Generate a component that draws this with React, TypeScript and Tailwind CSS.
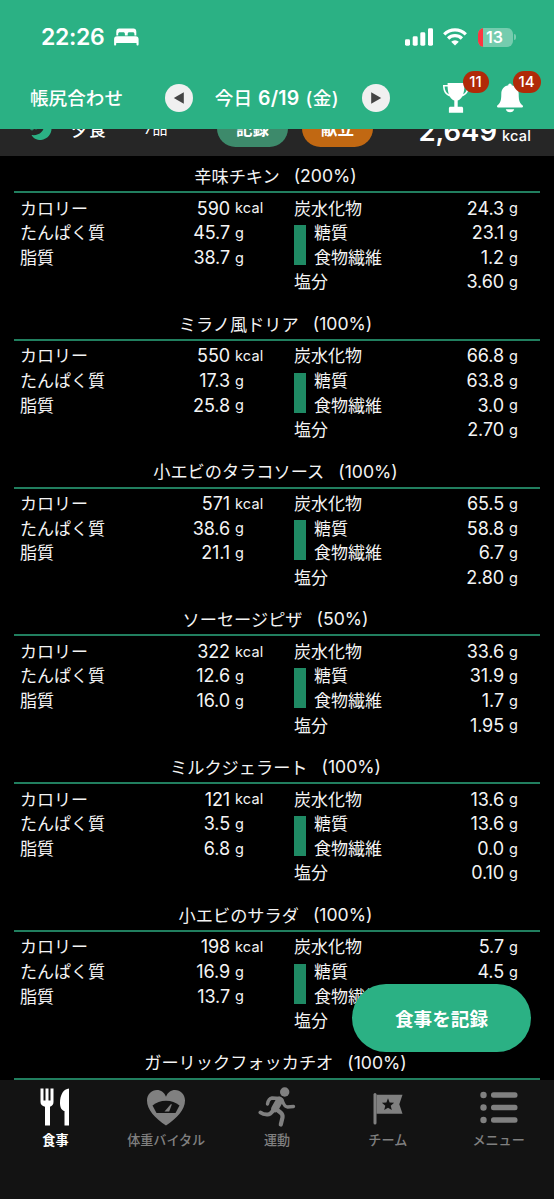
import type { ReactNode } from 'react';
import clsx from 'clsx';

type Nutrients = {
  kcal: string;
  protein: string;
  fat: string;
  carbs: string;
  sugar: string;
  fiber: string;
  salt: string;
};

type Dish = {
  name: string;
  percent: number;
  nutrients?: Nutrients;
};

const dishes: Dish[] = [
  { name: '辛味チキン', percent: 200, nutrients: { kcal: '590', protein: '45.7', fat: '38.7', carbs: '24.3', sugar: '23.1', fiber: '1.2', salt: '3.60' } },
  { name: 'ミラノ風ドリア', percent: 100, nutrients: { kcal: '550', protein: '17.3', fat: '25.8', carbs: '66.8', sugar: '63.8', fiber: '3.0', salt: '2.70' } },
  { name: '小エビのタラコソース', percent: 100, nutrients: { kcal: '571', protein: '38.6', fat: '21.1', carbs: '65.5', sugar: '58.8', fiber: '6.7', salt: '2.80' } },
  { name: 'ソーセージピザ', percent: 50, nutrients: { kcal: '322', protein: '12.6', fat: '16.0', carbs: '33.6', sugar: '31.9', fiber: '1.7', salt: '1.95' } },
  { name: 'ミルクジェラート', percent: 100, nutrients: { kcal: '121', protein: '3.5', fat: '6.8', carbs: '13.6', sugar: '13.6', fiber: '0.0', salt: '0.10' } },
  { name: '小エビのサラダ', percent: 100, nutrients: { kcal: '198', protein: '16.9', fat: '13.7', carbs: '5.7', sugar: '4.5', fiber: '', salt: '' } },
  { name: 'ガーリックフォッカチオ', percent: 100 },
];

function Row({ label, value, unit }: { label: string; value: string; unit: string }) {
  return (
    <div className="flex h-[24.6px] items-center">
      <span className="flex-1 pt-[2px]">{label}</span>
      {value && (
        <>
          <span className="pt-px text-[18px] tracking-[-0.1px]">{value}</span>
          <span className="ml-[5px] w-[30px] pt-px text-[14.5px] tracking-[0.2px]">{unit}</span>
        </>
      )}
    </div>
  );
}

function DishBlock({ name, percent, nutrients }: Dish) {
  return (
    <section className="h-[147.75px] shrink-0 px-3.5">
      <h3 className="flex h-[31px] items-center justify-center gap-[14px] pr-[3px]">
        <span className="pt-[2px] text-[17.2px]">{name}</span>
        <span className="pt-px text-[17.6px]">({percent}%)</span>
      </h3>
      <div className="h-[2px] bg-[#217f5f]" />
      {nutrients && (
        <div className="flex pt-[2.8px] pl-1.5">
          <div className="w-[245px]">
            <Row label="カロリー" value={nutrients.kcal} unit="kcal" />
            <Row label="たんぱく質" value={nutrients.protein} unit="g" />
            <Row label="脂質" value={nutrients.fat} unit="g" />
          </div>
          <div className="ml-[29px] w-[245px]">
            <Row label="炭水化物" value={nutrients.carbs} unit="g" />
            <div className="flex items-center">
              <div className="h-[40px] w-[11.5px] bg-[#1f8a64]" />
              <div className="ml-[8.5px] flex-1">
                <Row label="糖質" value={nutrients.sugar} unit="g" />
                <Row label="食物繊維" value={nutrients.fiber} unit="g" />
              </div>
            </div>
            <Row label="塩分" value={nutrients.salt} unit="g" />
          </div>
        </div>
      )}
    </section>
  );
}

function StatusBar() {
  return (
    <div className="flex h-[74px] items-center pl-[41px]">
      <span className="w-[73px] text-[23px] font-semibold tracking-[-0.3px]">22:26</span>
      <svg width="25" height="18" viewBox="0 0 25 18" fill="currentColor">
        <path d="M2.3 7.4V3.6C2.3 1.5 3.4.5 5.2.5h14.2c1.8 0 2.9 1 2.9 3.1v3.8h-1.9V6.1c0-1.2-.6-1.8-1.7-1.8h-3.3c-1.1 0-1.7.6-1.7 1.8v1.3h-2.8V6.1c0-1.2-.6-1.8-1.7-1.8H5.9c-1.1 0-1.7.6-1.7 1.8v1.3z" />
        <path d="M3 8.3h18.6c2 0 3 1 3 3v5c0 .8-.4 1.2-1 1.2s-1.1-.4-1.1-1.2v-1.2H2.2v1.2c0 .8-.5 1.2-1.1 1.2-.7 0-1-.4-1-1.2v-5c0-2 1-3 2.9-3z" />
      </svg>
      <svg className="ml-auto" width="28" height="18" viewBox="0 0 28 18" fill="currentColor">
        <rect x="0" y="11.3" width="5" height="6.4" rx="1.4" />
        <rect x="7.7" y="8.3" width="5" height="9.4" rx="1.4" />
        <rect x="15.3" y="4.3" width="5" height="13.4" rx="1.4" />
        <rect x="23" y="0.3" width="5" height="17.4" rx="1.4" />
      </svg>
      <svg className="ml-[10px]" width="24" height="18" viewBox="0 0 24 18" fill="none" stroke="currentColor" strokeWidth="3.2">
        <path d="M1.2 6.3a15.5 15.5 0 0 1 21.6 0" />
        <path d="M5.1 10.5a9.8 9.8 0 0 1 13.8 0" />
        <path d="M12 17.6 8.2 13.8a5.5 5.5 0 0 1 7.6 0z" fill="currentColor" stroke="none" />
      </svg>
      <div className="ml-[11px] flex h-[19px] w-[35px] items-center overflow-hidden rounded-[6px] bg-[#75ccae]">
        <div className="h-full w-[5px] bg-[#fc3541]" />
        <span className="ml-[3px] text-[16px] leading-[19px] font-semibold">13</span>
      </div>
      <div className="mr-[38px] ml-px h-[6px] w-[2px] rounded-r-full bg-[#75ccae]" />
    </div>
  );
}

function CircleButton({ flip }: { flip?: boolean }) {
  return (
    <button className="flex size-[28px] items-center justify-center rounded-full bg-[#f0f0f0]">
      <svg className={clsx(flip && 'rotate-180')} width="12" height="12" viewBox="0 0 12 12" fill="#444">
        <path d="M.8 6 10.8.3v11.4z" />
      </svg>
    </button>
  );
}

function Badge({ children, className }: { children: ReactNode; className: string }) {
  return (
    <span className={clsx('absolute flex h-[22px] items-center justify-center rounded-full bg-[#b02a08] text-[15px] font-medium', className)}>
      {children}
    </span>
  );
}

function Header() {
  return (
    <header className="relative z-10 h-[129px] shrink-0 bg-[#2bb184]">
      <StatusBar />
      <div className="flex h-[48px] items-center pl-[30px] text-[18.6px] font-medium">
        <span className="w-[134.5px]">帳尻合わせ</span>
        <CircleButton />
        <span className="flex w-[169px] items-center justify-center gap-[6px] whitespace-nowrap">
          <span>今日</span>
          <span className="pt-px text-[19.5px] font-semibold tracking-[0.2px]">6/19</span>
          <span className="tracking-[0.5px]">(金)</span>
        </span>
        <CircleButton flip />
        <div className="relative ml-[53px]">
          <svg width="26" height="30" viewBox="0 0 26 30" fill="currentColor">
            <path d="M4.6 0h16.8v2.1H26c0 6.4-2.1 9.900-6.800 11.300-1.200 2.200-2.600 3.400-4.500 4.200v6.200h3.700c1.100 0 1.700.6 1.700 1.700v4.200H5.900v-4.200c0-1.100.6-1.700 1.700-1.700h3.700v-6.200c-1.900-.8-3.300-2-4.500-4.200C2.100 12 0 8.500 0 2.100h4.600zM1.600 3.600c.3 3.900 1.500 6.400 4.200 7.700-.7-2-1.100-4.600-1.200-7.700zm22.800 0h-3c-.1 3.100-.5 5.700-1.200 7.700 2.700-1.300 3.900-3.800 4.200-7.700z" />
          </svg>
          <Badge className="-top-[12.5px] left-[20px] w-[26px]">11</Badge>
        </div>
        <div className="relative ml-[28px]">
          <svg width="26" height="30" viewBox="0 0 26 30" fill="currentColor">
            <path d="M13 .5c1 0 1.700.8 1.700 1.700 4.600.8 7 4.200 7 8.700 0 6.500 1 9.200 3.800 11.400.9.8.6 2.200-.7 2.200H1.200C-.1 24.500-.4 23.100.5 22.300 3.300 20.100 4.300 17.400 4.300 10.900c0-4.500 2.400-7.900 7-8.700C11.300 1.300 12 .5 13 .5zM8.800 26.200h8.400c-.5 1.900-2 3-4.200 3s-3.700-1.100-4.200-3z" />
          </svg>
          <Badge className="-top-[12.5px] left-[16px] w-[28px]">14</Badge>
        </div>
      </div>
    </header>
  );
}

// Meal heading scrolled partly under the header
function MealStrip() {
  return (
    <div className="h-[27px] shrink-0 bg-[#262626]">
      <div className="-mt-[19px] flex h-[37px] pl-[30px] text-[17.5px] font-medium">
        <svg className="mt-[8px]" width="22" height="22" viewBox="0 0 22 22" fill="#2bb184">
          <path d="M20 4c4 8 0 17-9 18-4.500 0-8-2-9.500-5C9 18 14.500 13.500 14.500 6z" />
          <path d="m.5 11.500 2 .5 1.500-2M6 11.500l2-2" fill="none" stroke="#2bb184" />
        </svg>
        <span className="mt-[11px] ml-[19px] w-[73px]">夕食</span>
        <span className="mt-[11px] w-[73px] text-[15px] font-normal">7品</span>
        <span className="flex h-[37px] w-[71px] items-center justify-center rounded-full bg-[#3d8a6b] pt-[2px] text-[16.5px] font-semibold">記録</span>
        <span className="ml-[14px] flex h-[37px] w-[71px] items-center justify-center rounded-full bg-[#c16812] pt-[2px] text-[16.5px] font-semibold">献立</span>
        <span className="ml-auto pr-[23px] text-[27.5px] leading-[43px] font-semibold whitespace-nowrap">
          2,649
          <span className="ml-[5px] text-[14.5px] font-medium tracking-[0.2px]">kcal</span>
        </span>
      </div>
    </div>
  );
}

function ForkKnife() {
  return (
    <svg width="30" height="38" viewBox="0 0 30 38" fill="currentColor">
      <path d="M.5.5h3v12h2V.5h3v12h2V.5h3V14c0 2.600-1.300 4-3.500 4.700V37.500H5V18.700C2 18 .5 16.600.5 14zM29 .5v37h-4.500V23c-3-.8-4.500-3.500-4.500-8.300C20 7 23.500.8 29 .5z" />
    </svg>
  );
}

function HeartScale() {
  return (
    <svg width="40" height="37" viewBox="0 0 40 37" fill="currentColor">
      <path d="M20 36.500C9 29 1 21 1 11.500 1 5.500 5.500 1 11 1c4 0 7.300 2.300 9 6.800C21.700 3.300 25 1 29 1c5.500 0 10 4.500 10 10.500C39 21 31 29 20 36.500z" />
      <path fill="#131313" d="M6.500 16.500Q12 11.800 20 11.800t13.500 4.700L29.500 24h-19z" />
      <path d="m18.500 22.500 6.500-7.500.8.500-2.600 7z" />
    </svg>
  );
}

function Runner() {
  return (
    <svg width="38" height="42" viewBox="0 0 38 42" fill="none" stroke="currentColor" strokeLinecap="round" strokeLinejoin="round">
      <circle cx="26.7" cy="6" r="4.7" fill="currentColor" stroke="none" />
      <path d="M9.5 18Q10.5 12.5 14 12L22 12.500" strokeWidth="3.4" />
      <path d="M21.5 14.5 17 22.5" strokeWidth="7.5" />
      <path d="M24 14Q26.5 21 29.5 21L35.500 20.500" strokeWidth="3.4" />
      <path d="M16 23.5Q12 29 9 28.500 5 28.500 2.500 26.500" strokeWidth="4" />
      <path d="M18 23 22.5 26.500Q25 28.500 24.500 31.500L22.800 38.500" strokeWidth="4.2" />
    </svg>
  );
}

function TeamFlag() {
  return (
    <svg className="mt-[3px]" width="30" height="32" viewBox="0 0 30 32" fill="currentColor">
      <rect x="0.5" y="0" width="3" height="31.5" rx="1.5" />
      <path fillRule="evenodd" d="M3.500 1.800h26l-3.200 9.500 3.200 9.500h-26zM15 5.300l-1.600 4.200-4.500.3 3.400 2.900-1.100 4.400 3.800-2.400 3.800 2.400-1.100-4.400 3.400-2.900-4.500-.3z" />
    </svg>
  );
}

function MenuLines() {
  return (
    <svg width="38" height="33" viewBox="0 0 38 33" fill="currentColor">
      {[4, 16.5, 29].map(y => (
        <g key={y}>
          <circle cx="3.5" cy={y} r="3.2" />
          <rect x="11" y={y - 2.7} width="26.5" height="5.4" rx="2.5" />
        </g>
      ))}
    </svg>
  );
}

const tabs = [
  { label: '食事', icon: <ForkKnife /> },
  { label: '体重バイタル', icon: <HeartScale /> },
  { label: '運動', icon: <Runner /> },
  { label: 'チーム', icon: <TeamFlag /> },
  { label: 'メニュー', icon: <MenuLines /> },
];

export default function App() {
  return (
    <div className="relative flex h-[1199px] w-[554px] flex-col overflow-hidden bg-black font-['Inter','Noto_Sans_CJK_JP',sans-serif] text-[17px] leading-none text-white">
      <Header />
      <MealStrip />
      <main className="flex min-h-0 flex-1 flex-col overflow-hidden pt-[4px] text-[#f4f4f4]">
        {dishes.map(dish => (
          <DishBlock key={dish.name} {...dish} />
        ))}
      </main>
      <button className="absolute right-[23px] bottom-[147px] flex h-[68px] w-[179px] items-center justify-center rounded-full bg-[#2bb184] pt-[2px] text-[18.6px] font-bold">
        食事を記録
      </button>
      <nav className="grid h-[119px] shrink-0 grid-cols-5 bg-[#131313] text-[#808080]">
        {tabs.map((tab, i) => (
          <div key={tab.label} className={clsx('flex flex-col items-center', i === 0 && 'text-white')}>
            <div className="flex h-[54px] items-center justify-center">{tab.icon}</div>
            <span className={clsx('text-[13.1px] whitespace-nowrap', i === 0 ? 'font-bold' : 'font-medium')}>{tab.label}</span>
          </div>
        ))}
      </nav>
    </div>
  );
}
